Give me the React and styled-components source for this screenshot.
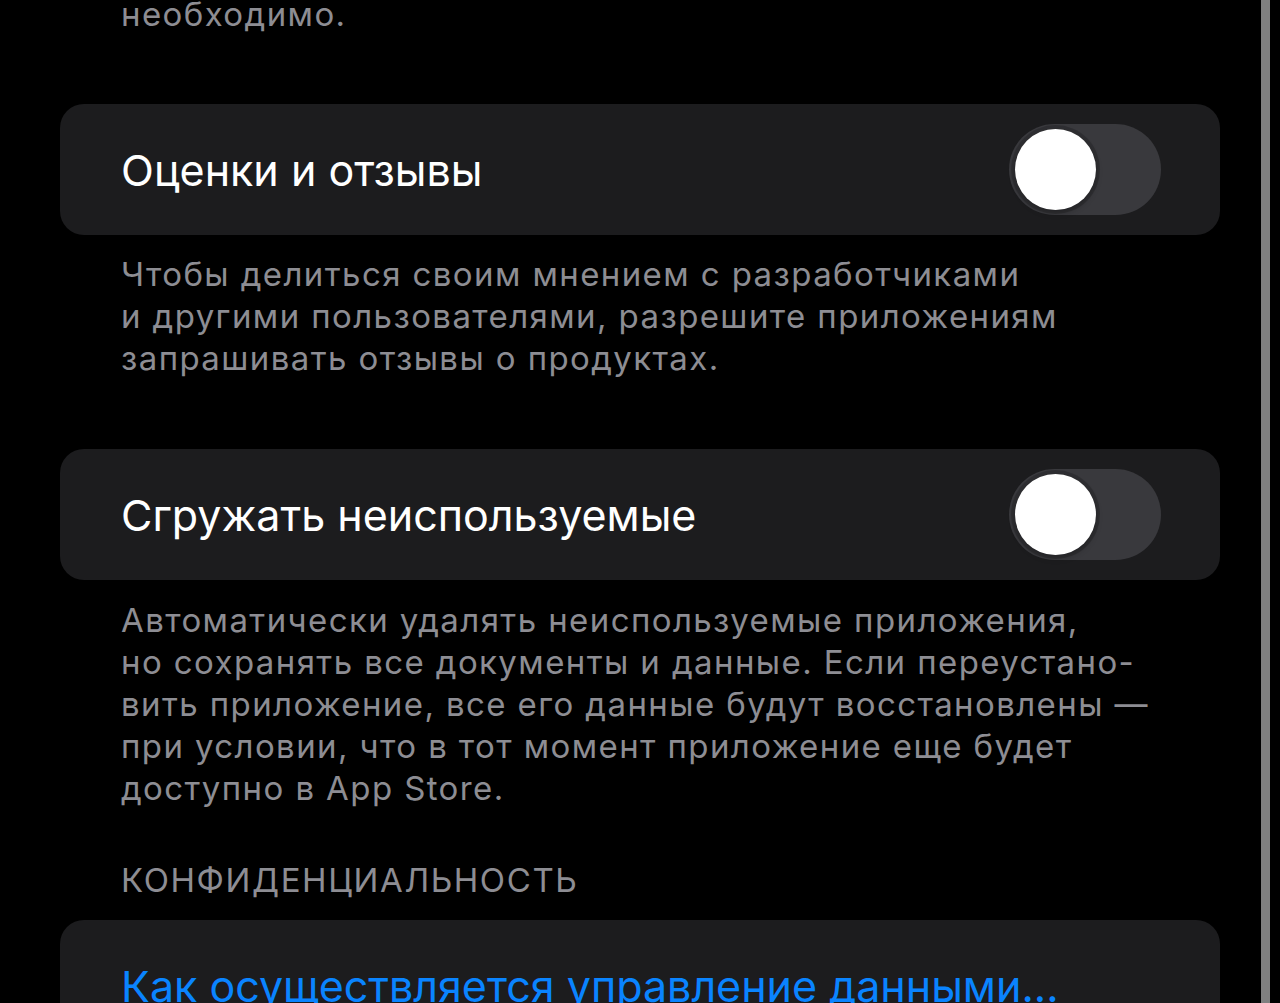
import React, { useState } from 'react';
import styled, { createGlobalStyle } from 'styled-components';

const GlobalStyle = createGlobalStyle`
  html, body {
    margin: 0;
    padding: 0;
    background: #000;
  }
  body {
    font-family: Inter, "Noto Sans", "Liberation Sans", sans-serif;
    -webkit-font-smoothing: antialiased;
  }
`;

const Screen = styled.div`
  position: relative;
  width: 1280px;
  height: 1003px;
  overflow: hidden;
  background: #000;
`;

const Column = styled.div`
  width: 1160px;
  margin-left: 60px;
  display: flex;
  flex-direction: column;
`;

const Footnote = styled.p`
  margin: ${(p) => p.$top || 0}px 0 0;
  padding: 0 61px;
  color: #8d8d93;
  font-size: 33px;
  line-height: 42px;
  letter-spacing: 1.4px;
`;

const SectionHeader = styled.div`
  margin-top: ${(p) => p.$top || 0}px;
  padding: 0 61px;
  color: #8d8d93;
  font-size: 33px;
  line-height: 42px;
  letter-spacing: 1.6px;
  text-transform: uppercase;
`;

const Group = styled.div`
  margin-top: ${(p) => p.$top || 0}px;
  background: #1c1c1e;
  border-radius: 24px;
  overflow: hidden;
`;

const Row = styled.div`
  height: 131px;
  display: flex;
  align-items: center;
  justify-content: space-between;
  padding: 0 59px 0 61px;
  box-sizing: border-box;
`;

const Label = styled.span`
  color: ${(p) => (p.$link ? '#0a84ff' : '#fff')};
  font-size: 43px;
  letter-spacing: 0;
  white-space: nowrap;
`;

const Track = styled.button`
  position: relative;
  width: 152px;
  height: 91px;
  padding: 0;
  border: none;
  border-radius: 46px;
  background: ${(p) => (p.$on ? '#30d158' : '#39393d')};
  cursor: pointer;
  transition: background 0.2s;
`;

const Knob = styled.span`
  position: absolute;
  top: 5px;
  left: ${(p) => (p.$on ? 66 : 6)}px;
  width: 81px;
  height: 81px;
  border-radius: 50%;
  background: #fff;
  box-shadow: 0 0 0 4px rgba(0, 0, 0, 0.18), 0 3px 6px rgba(0, 0, 0, 0.25);
  transition: left 0.2s;
`;

const ScrollIndicator = styled.div`
  position: absolute;
  top: 0;
  right: 10px;
  width: 9px;
  height: 100%;
  background: #808080;
`;

const Toggle = ({ initial = false }) => {
  const [on, setOn] = useState(initial);
  return (
    <Track $on={on} onClick={() => setOn(!on)}>
      <Knob $on={on} />
    </Track>
  );
};

const App = () => (
  <>
    <GlobalStyle />
    <Screen>
      <Column>
        <Footnote $top={-7}>необходимо.</Footnote>

        <Group $top={69}>
          <Row>
            <Label>Оценки и отзывы</Label>
            <Toggle />
          </Row>
        </Group>
        <Footnote $top={18}>
          Чтобы делиться своим мнением с разработчиками
          <br />
          и другими пользователями, разрешите приложениям
          <br />
          запрашивать отзывы о продуктах.
        </Footnote>

        <Group $top={70}>
          <Row>
            <Label>Сгружать неиспользуемые</Label>
            <Toggle />
          </Row>
        </Group>
        <Footnote $top={19}>
          Автоматически удалять неиспользуемые приложения,
          <br />
          но сохранять все документы и данные. Если переустано-
          <br />
          вить приложение, все его данные будут восстановлены —
          <br />
          при условии, что в тот момент приложение еще будет
          <br />
          доступно в App Store.
        </Footnote>

        <SectionHeader $top={50}>Конфиденциальность</SectionHeader>
        <Group $top={19}>
          <Row>
            <Label $link>Как осуществляется управление данными...</Label>
          </Row>
        </Group>
      </Column>
      <ScrollIndicator />
    </Screen>
  </>
);

export default App;
